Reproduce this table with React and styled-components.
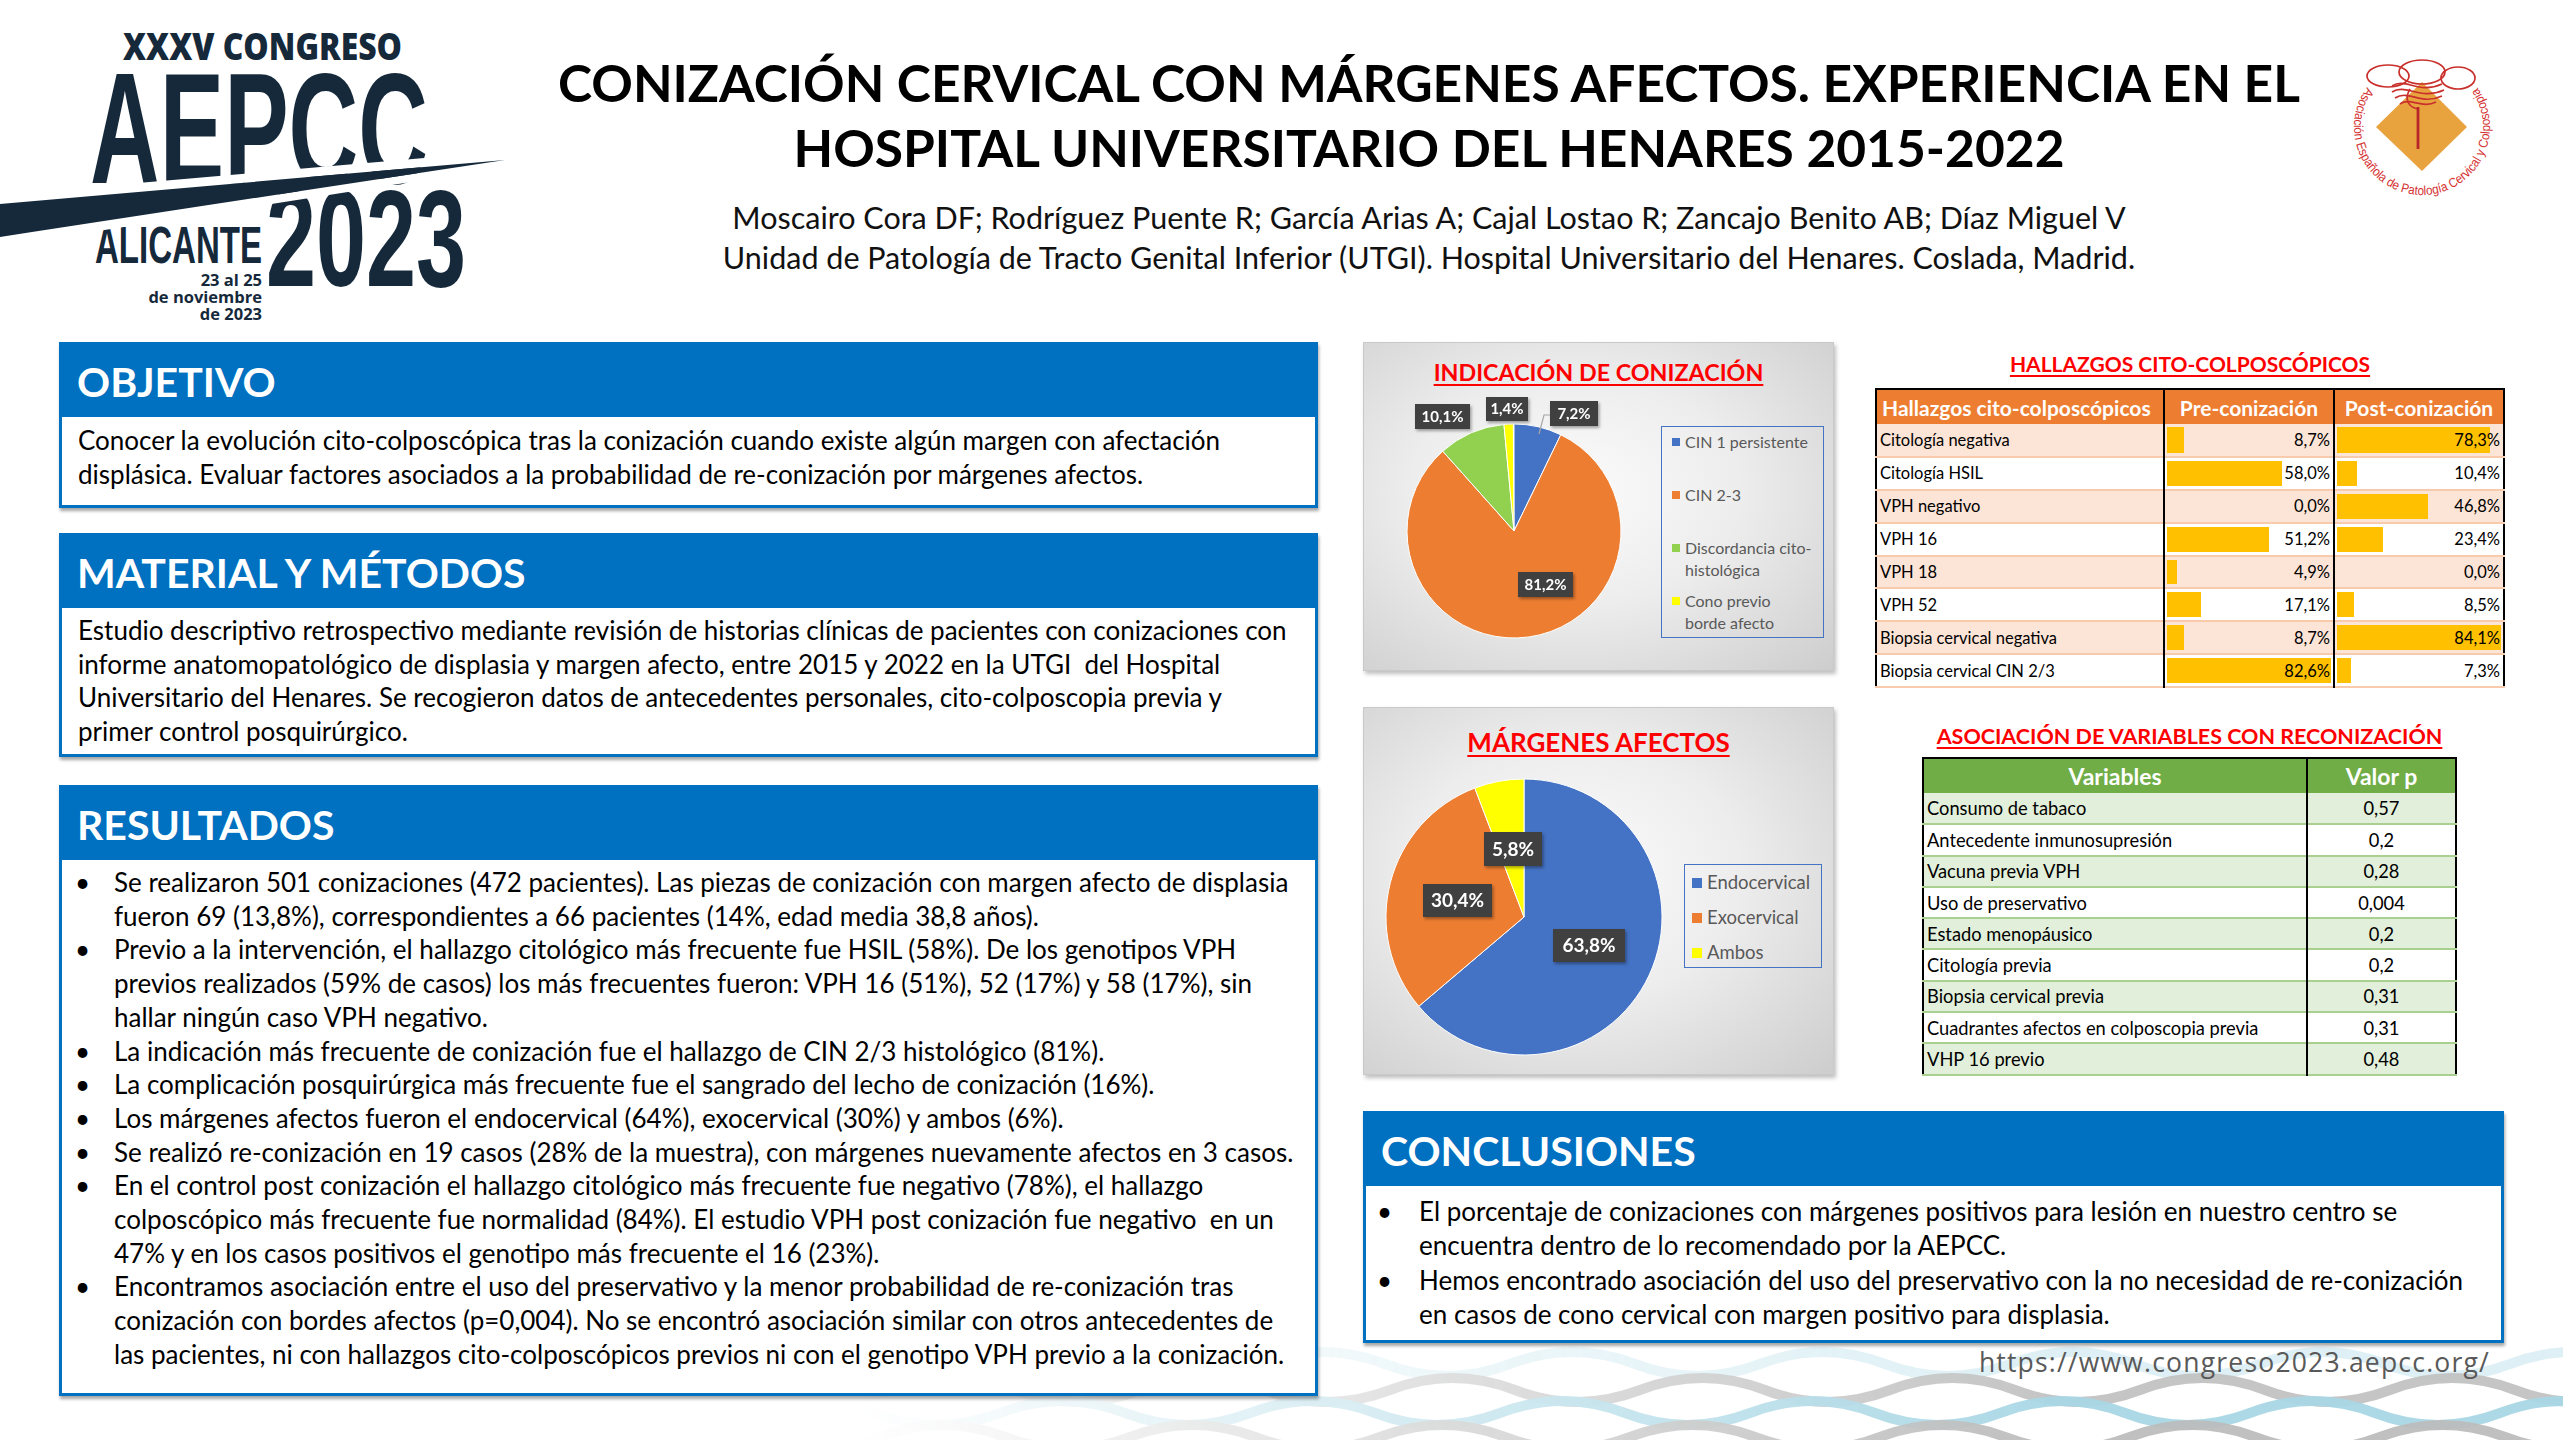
import React from "react";
import styled, { createGlobalStyle } from "styled-components";

const FONT = `Lato, "Open Sans", "Liberation Sans", sans-serif`;
const NAVY = "#15293b";

const GlobalStyle = createGlobalStyle`
  html, body { margin: 0; padding: 0; background: #fff; }
  body { width: 2563px; height: 1440px; overflow: hidden; font-family: ${FONT}; color: #000; }
`;

const Page = styled.div`
  position: relative;
  width: 2563px;
  height: 1440px;
  overflow: hidden;
  background: #fff;
`;

/* ---------- header ---------- */

const Header = styled.header`
  height: 342px;
  display: flex;
  align-items: flex-start;
`;

const TitleBlock = styled.div`
  flex: 1;
  text-align: center;
  padding-top: 50px;
`;

const MainTitle = styled.h1`
  margin: 0;
  font: 700 51.5px/65px ${FONT};
  color: #000;
  white-space: nowrap;
`;

const Authors = styled.p`
  margin: 17px 0 0;
  font: 400 30.5px/40px ${FONT};
  color: #111;
  white-space: nowrap;
`;

const SocietyWrap = styled.div`
  margin: 59px 65px 0 0;
  width: 150px;
  height: 142px;
`;

/* ---------- main ---------- */

const Main = styled.main`
  position: relative;
  z-index: 1;
  display: flex;
  gap: 45px;
  padding-left: 59px;
`;

const LeftCol = styled.div`
  width: 1259px;
  display: flex;
  flex-direction: column;
`;

const RightCol = styled.div`
  width: 1141px;
  display: flex;
  flex-direction: column;
`;

const Section = styled.section`
  box-sizing: border-box;
  height: ${(p) => p.$h}px;
  margin-top: ${(p) => p.$mt || 0}px;
  border: 3px solid #0070c0;
  background: #fff;
  box-shadow: 1px 3px 3px rgba(0, 0, 0, 0.35);
  display: flex;
  flex-direction: column;
`;

const SectionHead = styled.h2`
  margin: 0;
  flex-shrink: 0;
  height: 72px;
  background: #0070c0;
  color: #fff;
  font: 700 41px ${FONT};
  display: flex;
  align-items: center;
  padding-left: 15px;
`;

const SectionBody = styled.div`
  padding: ${(p) => p.$pt}px 16px 0 16px;
  font: 400 26px/33.7px ${FONT};
  color: #000;
  white-space: pre;
`;

const BulletList = styled.ul`
  list-style: none;
  margin: 0;
  padding: ${(p) => p.$pt}px 0 0 ${(p) => p.$indent}px;
  font: 400 26px/33.7px ${FONT};
  color: #000;
  white-space: pre;
`;

const BulletItem = styled.li`
  display: flex;
  margin-top: ${(p) => p.$gap || 0}px;
  &::before {
    content: "•";
    flex-shrink: 0;
    width: ${(p) => p.$bw}px;
  }
`;

/* ---------- charts ---------- */

const Row = styled.div`
  display: grid;
  grid-template-columns: 471px 1fr;
  column-gap: 41px;
  align-items: start;
  height: ${(p) => p.$h}px;
`;

const ChartFrame = styled.div`
  box-sizing: border-box;
  height: ${(p) => p.$h}px;
  border: 1px solid #c9c9c9;
  background: radial-gradient(ellipse at 45% 45%, #fbfbfb 0%, #ededed 45%, #cdcdcd 100%);
  box-shadow: 2px 3px 4px rgba(0, 0, 0, 0.25);
  display: flex;
  flex-direction: column;
`;

const ChartTitle = styled.div`
  box-sizing: border-box;
  flex-shrink: 0;
  height: ${(p) => p.$h}px;
  padding-top: ${(p) => p.$pt}px;
  text-align: center;
  font: 700 ${(p) => p.$fs}px/42px ${FONT};
  color: #ff0000;
  text-decoration: underline;
  text-decoration-thickness: 2px;
  text-underline-offset: 3px;
`;

const ChartBody = styled.div`
  flex: 1;
  display: flex;
  align-items: center;
  justify-content: space-between;
`;

const Legend = styled.div`
  box-sizing: border-box;
  width: ${(p) => p.$w}px;
  height: ${(p) => p.$h}px;
  margin: 0 ${(p) => p.$mr}px ${(p) => p.$mb || 0}px 0;
  padding: ${(p) => p.$pt}px 0 0 ${(p) => p.$pl}px;
  border: 1.5px solid #4472c4;
  font: 400 ${(p) => p.$fs}px/${(p) => p.$lh}px ${FONT};
  color: #595959;
  white-space: nowrap;
`;

const LegendItem = styled.div`
  display: flex;
  height: ${(p) => p.$step}px;
`;

const Swatch = styled.span`
  flex-shrink: 0;
  width: ${(p) => p.$s}px;
  height: ${(p) => p.$s}px;
  margin: ${(p) => (p.$lh - p.$s) / 2}px 5px 0 0;
  background: ${(p) => p.$c};
`;

/* ---------- tables ---------- */

const TableBlock = styled.div`
  display: flex;
  flex-direction: column;
  align-items: center;
`;

const TableTitle = styled.div`
  margin: ${(p) => p.$m};
  font: 700 ${(p) => p.$fs}px/30px ${FONT};
  color: #ff0000;
  text-decoration: underline;
  text-decoration-thickness: 2px;
  text-underline-offset: 3px;
  white-space: nowrap;
`;

const DataTable = styled.table`
  width: ${(p) => p.$w}px;
  table-layout: fixed;
  border-collapse: collapse;
  border: 2px solid #000;
  font: 400 ${(p) => p.$fs}px ${FONT};
  color: #000;
`;

const HeadCell = styled.th`
  height: 34px;
  padding: 0 5px;
  background: ${(p) => p.$bg};
  color: #fff;
  font-weight: 700;
  font-size: ${(p) => p.$fs}px;
  text-align: ${(p) => p.$align || "center"};
  white-space: nowrap;
  border-left: 2px solid #000;
  &:first-child {
    border-left: none;
  }
`;

const BodyRow = styled.tr`
  height: ${(p) => p.$h}px;
  background: ${(p) => (p.$alt ? p.$tint : "#fff")};
  border-bottom: 2px solid ${(p) => p.$sep};
`;

const LabelCell = styled.td`
  padding: 0 3px;
  white-space: nowrap;
`;

const CenterCell = styled.td`
  text-align: center;
  border-left: 2px solid #000;
`;

const BarCell = styled.td`
  position: relative;
  padding: 0 3px 0 0;
  text-align: right;
  border-left: 2px solid #000;
`;

const Bar = styled.span`
  position: absolute;
  left: 2px;
  top: 3px;
  bottom: 3px;
  background: #ffc000;
`;

const CellText = styled.span`
  position: relative;
`;

const Url = styled.div`
  margin-top: 2px;
  padding-right: 14px;
  text-align: right;
  font: 400 26.5px/34px "Open Sans", ${FONT};
  letter-spacing: 1.2px;
  color: #595959;
`;

const WaveLayer = styled.svg`
  position: absolute;
  left: 860px;
  top: 1290px;
  z-index: 0;
  pointer-events: none;
`;

/* ---------- data ---------- */

const indication = [
  { name: "CIN 1 persistente", value: 7.2, color: "#4472c4" },
  { name: "CIN 2-3", value: 81.2, color: "#ed7d31" },
  { name: "Discordancia cito-histológica", value: 10.1, color: "#92d050", lines: ["Discordancia cito-", "histológica"] },
  { name: "Cono previo borde afecto", value: 1.4, color: "#ffff00", lines: ["Cono previo", "borde afecto"] },
];

const margins = [
  { name: "Endocervical", value: 63.8, color: "#4472c4" },
  { name: "Exocervical", value: 30.4, color: "#ed7d31" },
  { name: "Ambos", value: 5.8, color: "#ffff00" },
];

const findings = [
  ["Citología negativa", 8.7, 78.3],
  ["Citología HSIL", 58.0, 10.4],
  ["VPH negativo", 0.0, 46.8],
  ["VPH 16", 51.2, 23.4],
  ["VPH 18", 4.9, 0.0],
  ["VPH 52", 17.1, 8.5],
  ["Biopsia cervical negativa", 8.7, 84.1],
  ["Biopsia cervical CIN 2/3", 82.6, 7.3],
];

const variables = [
  ["Consumo de tabaco", "0,57"],
  ["Antecedente inmunosupresión", "0,2"],
  ["Vacuna previa VPH", "0,28"],
  ["Uso de preservativo", "0,004"],
  ["Estado menopáusico", "0,2"],
  ["Citología previa", "0,2"],
  ["Biopsia cervical previa", "0,31"],
  ["Cuadrantes afectos en colposcopia previa", "0,31"],
  ["VHP 16 previo", "0,48"],
];

const objetivo = [
  "Conocer la evolución cito-colposcópica tras la conización cuando existe algún margen con afectación",
  "displásica. Evaluar factores asociados a la probabilidad de re-conización por márgenes afectos.",
];

const metodos = [
  "Estudio descriptivo retrospectivo mediante revisión de historias clínicas de pacientes con conizaciones con",
  "informe anatomopatológico de displasia y margen afecto, entre 2015 y 2022 en la UTGI  del Hospital",
  "Universitario del Henares. Se recogieron datos de antecedentes personales, cito-colposcopia previa y",
  "primer control posquirúrgico.",
];

const resultados = [
  [
    "Se realizaron 501 conizaciones (472 pacientes). Las piezas de conización con margen afecto de displasia",
    "fueron 69 (13,8%), correspondientes a 66 pacientes (14%, edad media 38,8 años).",
  ],
  [
    "Previo a la intervención, el hallazgo citológico más frecuente fue HSIL (58%). De los genotipos VPH",
    "previos realizados (59% de casos) los más frecuentes fueron: VPH 16 (51%), 52 (17%) y 58 (17%), sin",
    "hallar ningún caso VPH negativo.",
  ],
  ["La indicación más frecuente de conización fue el hallazgo de CIN 2/3 histológico (81%)."],
  ["La complicación posquirúrgica más frecuente fue el sangrado del lecho de conización (16%)."],
  ["Los márgenes afectos fueron el endocervical (64%), exocervical (30%) y ambos (6%)."],
  ["Se realizó re-conización en 19 casos (28% de la muestra), con márgenes nuevamente afectos en 3 casos."],
  [
    "En el control post conización el hallazgo citológico más frecuente fue negativo (78%), el hallazgo",
    "colposcópico más frecuente fue normalidad (84%). El estudio VPH post conización fue negativo  en un",
    "47% y en los casos positivos el genotipo más frecuente el 16 (23%).",
  ],
  [
    "Encontramos asociación entre el uso del preservativo y la menor probabilidad de re-conización tras",
    "conización con bordes afectos (p=0,004). No se encontró asociación similar con otros antecedentes de",
    "las pacientes, ni con hallazgos cito-colposcópicos previos ni con el genotipo VPH previo a la conización.",
  ],
];

const conclusiones = [
  [
    "El porcentaje de conizaciones con márgenes positivos para lesión en nuestro centro se",
    "encuentra dentro de lo recomendado por la AEPCC.",
  ],
  [
    "Hemos encontrado asociación del uso del preservativo con la no necesidad de re-conización",
    "en casos de cono cervical con margen positivo para displasia.",
  ],
];

const pct = (v) => v.toFixed(1).replace(".", ",") + "%";

const Lines = ({ lines }) =>
  lines.map((l, i) => (
    <React.Fragment key={i}>
      {i > 0 && <br />}
      {l}
    </React.Fragment>
  ));

/* ---------- drawings ---------- */

function AepccLogo() {
  return (
    <svg width="510" height="335" viewBox="0 0 510 335" style={{ display: "block", flexShrink: 0 }}>
      <g fill={NAVY} fontFamily="'Liberation Sans', Arial, sans-serif" fontWeight="700">
        <text x="123" y="60" fontSize="37" textLength="279" lengthAdjust="spacingAndGlyphs" fontFamily="'Open Sans', Lato, sans-serif" fontWeight="800">
          XXXV CONGRESO
        </text>
        <text x="90" y="183" fontSize="158" textLength="338" lengthAdjust="spacingAndGlyphs">
          AEPCC
        </text>
        <text x="266" y="286" fontSize="137" textLength="200" lengthAdjust="spacingAndGlyphs">
          2023
        </text>
        <text x="95" y="263" fontSize="52" textLength="167" lengthAdjust="spacingAndGlyphs">
          ALICANTE
        </text>
        <g fontFamily="'Open Sans', Lato, sans-serif" fontSize="16.5" textAnchor="end">
          <text x="262" y="286">23 al 25</text>
          <text x="262" y="303">de noviembre</text>
          <text x="262" y="320">de 2023</text>
        </g>
      </g>
      <path d="M0,195 L505,151 L505,160 L0,204 Z" fill="#fff" />
      <path d="M0,237 Q300,191 505,160 L505,167 Q300,200 0,246 Z" fill="#fff" />
      <path d="M0,204 L505,160 Q300,191 0,237 Z" fill={NAVY} />
    </svg>
  );
}

function SocietyLogo() {
  return (
    <svg width="150" height="142" viewBox="0 0 150 142">
      <defs>
        <path id="ringPath" d="M19,28 A68,68 0 1 0 126.8,25.2" />
      </defs>
      <path d="M28,68 L74,23 L119,68 L74,112 Z" fill="#e8a33e" />
      <g fill="none" stroke="#c9302c" strokeWidth="1.7">
        <ellipse cx="40" cy="17" rx="21" ry="11" />
        <ellipse cx="74" cy="13" rx="23" ry="12" />
        <ellipse cx="110" cy="19" rx="17" ry="11" />
        <path d="M44 27 C58 18, 70 36, 94 25" />
        <path d="M44 33 C58 24, 72 42, 96 31" />
        <path d="M47 39 C61 30, 73 47, 94 37" />
        <path d="M52 45 C62 38, 74 50, 88 43" />
        <path d="M62 30 C56 40, 60 48, 70 50" />
      </g>
      <path d="M70 48 L70 90" stroke="#b8262a" strokeWidth="2.8" />
      <text fontSize="13" fill="#d4302f" fontFamily="'Liberation Sans Narrow', 'Liberation Sans', sans-serif">
        <textPath href="#ringPath" textLength="298" lengthAdjust="spacingAndGlyphs">
          Asociación Española de Patología Cervical y Colposcopia
        </textPath>
      </text>
    </svg>
  );
}

function PieChart({ width, height, cx, cy, r, slices, labels, fs, leader }) {
  let a = -Math.PI / 2;
  const paths = slices.map((s) => {
    const a0 = a;
    const a1 = a + (s.value / 100) * 2 * Math.PI;
    a = a1;
    const large = a1 - a0 > Math.PI ? 1 : 0;
    const x0 = cx + r * Math.cos(a0);
    const y0 = cy + r * Math.sin(a0);
    const x1 = cx + r * Math.cos(a1);
    const y1 = cy + r * Math.sin(a1);
    return (
      <path
        key={s.name}
        d={`M${cx},${cy} L${x0},${y0} A${r},${r} 0 ${large} 1 ${x1},${y1} Z`}
        fill={s.color}
        stroke="#fff"
        strokeWidth="1"
      />
    );
  });
  return (
    <svg width={width} height={height} style={{ display: "block", flexShrink: 0 }}>
      <defs>
        <filter id={`sh${fs}`} x="-20%" y="-20%" width="150%" height="160%">
          <feDropShadow dx="1.5" dy="2" stdDeviation="1.5" floodColor="#000" floodOpacity="0.35" />
        </filter>
      </defs>
      {paths}
      {leader && <path d={leader} stroke="#a6a6a6" strokeWidth="1.2" fill="none" />}
      {labels.map((l) => (
        <g key={l.text} filter={`url(#sh${fs})`}>
          <rect x={l.x} y={l.y} width={l.w} height={l.h} fill="#404040" />
          <text
            x={l.x + l.w / 2}
            y={l.y + l.h / 2 + fs * 0.36}
            textAnchor="middle"
            fill="#fff"
            fontSize={fs}
            fontWeight="700"
            fontFamily={FONT}
          >
            {l.text}
          </text>
        </g>
      ))}
    </svg>
  );
}

function wavePath(y, amp, len, width, phase) {
  let d = `M${phase - len},${y} q${len / 4},${-amp * 2} ${len / 2},0`;
  for (let x = phase - len / 2; x < width + len; x += len / 2) d += ` t${len / 2},0`;
  return d;
}

function Waves() {
  const w = 1703;
  const rows = [
    { y: 74, c: "#c8e6ef", o: 0.6, p: 150 },
    { y: 100, c: "#c2c2c2", o: 0.95, p: 30 },
    { y: 123, c: "#a9d7e5", o: 0.95, p: 140 },
    { y: 147, c: "#bdbdbd", o: 0.95, p: 20 },
  ];
  return (
    <WaveLayer width={w} height="150" viewBox={`0 0 ${w} 150`}>
      <defs>
        <linearGradient id="waveFade" x1="0" x2="1" y1="0" y2="0">
          <stop offset="0" stopColor="#fff" stopOpacity="0" />
          <stop offset="0.35" stopColor="#fff" stopOpacity="0.55" />
          <stop offset="0.7" stopColor="#fff" stopOpacity="1" />
        </linearGradient>
        <mask id="waveMask">
          <rect width={w} height="150" fill="url(#waveFade)" />
        </mask>
      </defs>
      <g mask="url(#waveMask)" fill="none" strokeWidth="10" strokeLinecap="round">
        {rows.map((r) => (
          <path key={r.y} d={wavePath(r.y, 12, 250, w, r.p)} stroke={r.c} opacity={r.o} />
        ))}
      </g>
    </WaveLayer>
  );
}

function ChartLegend({ items, ...rest }) {
  return (
    <Legend {...rest}>
      {items.map((it) => (
        <LegendItem key={it.name} $step={rest.$step}>
          <Swatch $c={it.color} $s={rest.$s} $lh={rest.$lh} />
          <div>
            <Lines lines={it.lines || [it.name]} />
          </div>
        </LegendItem>
      ))}
    </Legend>
  );
}

export default function App() {
  const preMax = Math.max(...findings.map((f) => f[1]));
  const postMax = Math.max(...findings.map((f) => f[2]));

  return (
    <Page>
      <GlobalStyle />
      <Header>
        <AepccLogo />
        <TitleBlock>
          <MainTitle>
            CONIZACIÓN CERVICAL CON MÁRGENES AFECTOS. EXPERIENCIA EN EL
            <br />
            HOSPITAL UNIVERSITARIO DEL HENARES 2015-2022
          </MainTitle>
          <Authors>
            Moscairo Cora DF; Rodríguez Puente R; García Arias A; Cajal Lostao R; Zancajo Benito AB; Díaz Miguel V
            <br />
            Unidad de Patología de Tracto Genital Inferior (UTGI). Hospital Universitario del Henares. Coslada, Madrid.
          </Authors>
        </TitleBlock>
        <SocietyWrap>
          <SocietyLogo />
        </SocietyWrap>
      </Header>

      <Main>
        <LeftCol>
          <Section $h={166}>
            <SectionHead>OBJETIVO</SectionHead>
            <SectionBody $pt={7}>
              <Lines lines={objetivo} />
            </SectionBody>
          </Section>

          <Section $h={224} $mt={25}>
            <SectionHead>MATERIAL Y MÉTODOS</SectionHead>
            <SectionBody $pt={6}>
              <Lines lines={metodos} />
            </SectionBody>
          </Section>

          <Section $h={611} $mt={28}>
            <SectionHead>RESULTADOS</SectionHead>
            <BulletList $pt={6} $indent={13}>
              {resultados.map((lines, i) => (
                <BulletItem key={i} $bw={39}>
                  <div>
                    <Lines lines={lines} />
                  </div>
                </BulletItem>
              ))}
            </BulletList>
          </Section>
        </LeftCol>

        <RightCol>
          <Row $h={365}>
            <ChartFrame $h={329}>
              <ChartTitle $h={50} $pt={8} $fs={23.3}>
                INDICACIÓN DE CONIZACIÓN
              </ChartTitle>
              <ChartBody>
                <PieChart
                  width={290}
                  height={277}
                  cx={150}
                  cy={138}
                  r={107}
                  slices={indication}
                  fs={15}
                  leader="M186,22 L180,22 L175,41"
                  labels={[
                    { text: "10,1%", x: 51, y: 11, w: 55, h: 25 },
                    { text: "1,4%", x: 122, y: 4, w: 42, h: 24 },
                    { text: "7,2%", x: 186, y: 8, w: 48, h: 25 },
                    { text: "81,2%", x: 154, y: 179, w: 55, h: 25 },
                  ]}
                />
                <ChartLegend
                  items={indication}
                  $w={163}
                  $h={212}
                  $mr={9}
                  $pt={4}
                  $pl={10}
                  $fs={16}
                  $lh={22}
                  $step={53}
                  $s={8}
                />
              </ChartBody>
            </ChartFrame>

            <TableBlock>
              <TableTitle $m="7px 0 9px" $fs={21}>
                HALLAZGOS CITO-COLPOSCÓPICOS
              </TableTitle>
              <DataTable $w={628} $fs={16.5}>
                <colgroup>
                  <col style={{ width: 288 }} />
                  <col style={{ width: 170 }} />
                  <col style={{ width: 170 }} />
                </colgroup>
                <thead>
                  <tr>
                    <HeadCell $bg="#ed7d31" $fs={21} $align="left">
                      Hallazgos cito-colposcópicos
                    </HeadCell>
                    <HeadCell $bg="#ed7d31" $fs={21}>
                      Pre-conización
                    </HeadCell>
                    <HeadCell $bg="#ed7d31" $fs={21}>
                      Post-conización
                    </HeadCell>
                  </tr>
                </thead>
                <tbody>
                  {findings.map(([label, pre, post], i) => (
                    <BodyRow key={label} $h={32.9} $alt={i % 2 === 0} $tint="#fce4d6" $sep="#f8cbad">
                      <LabelCell>{label}</LabelCell>
                      <BarCell>
                        <Bar style={{ width: `${(pre / preMax) * 97.5}%` }} />
                        <CellText>{pct(pre)}</CellText>
                      </BarCell>
                      <BarCell>
                        <Bar style={{ width: `${(post / postMax) * 97.5}%` }} />
                        <CellText>{pct(post)}</CellText>
                      </BarCell>
                    </BodyRow>
                  ))}
                </tbody>
              </DataTable>
            </TableBlock>
          </Row>

          <Row $h={404}>
            <ChartFrame $h={368}>
              <ChartTitle $h={60} $pt={13} $fs={26}>
                MÁRGENES AFECTOS
              </ChartTitle>
              <ChartBody>
                <PieChart
                  width={310}
                  height={306}
                  cx={160}
                  cy={149}
                  r={138}
                  slices={margins}
                  fs={19}
                  labels={[
                    { text: "5,8%", x: 120, y: 64, w: 58, h: 34 },
                    { text: "30,4%", x: 59, y: 116, w: 69, h: 33 },
                    { text: "63,8%", x: 189, y: 161, w: 72, h: 33 },
                  ]}
                />
                <ChartLegend
                  items={margins}
                  $w={138}
                  $h={104}
                  $mr={11}
                  $mb={10}
                  $pt={0}
                  $pl={7}
                  $fs={18.5}
                  $lh={35}
                  $step={35}
                  $s={10}
                />
              </ChartBody>
            </ChartFrame>

            <TableBlock>
              <TableTitle $m="14px 0 6px" $fs={21.5}>
                ASOCIACIÓN DE VARIABLES CON RECONIZACIÓN
              </TableTitle>
              <DataTable $w={533} $fs={18.3}>
                <colgroup>
                  <col style={{ width: 384 }} />
                  <col style={{ width: 149 }} />
                </colgroup>
                <thead>
                  <tr>
                    <HeadCell $bg="#70ad47" $fs={23}>
                      Variables
                    </HeadCell>
                    <HeadCell $bg="#70ad47" $fs={23}>
                      Valor p
                    </HeadCell>
                  </tr>
                </thead>
                <tbody>
                  {variables.map(([label, p], i) => (
                    <BodyRow key={label} $h={31.3} $alt={i % 2 === 0} $tint="#e2efda" $sep="#a9d08e">
                      <LabelCell>{label}</LabelCell>
                      <CenterCell>{p}</CenterCell>
                    </BodyRow>
                  ))}
                </tbody>
              </DataTable>
            </TableBlock>
          </Row>

          <Section $h={232}>
            <SectionHead>CONCLUSIONES</SectionHead>
            <BulletList $pt={9} $indent={11}>
              {conclusiones.map((lines, i) => (
                <BulletItem key={i} $bw={42} $gap={i ? 2 : 0}>
                  <div>
                    <Lines lines={lines} />
                  </div>
                </BulletItem>
              ))}
            </BulletList>
          </Section>

          <Url>https://www.congreso2023.aepcc.org/</Url>
        </RightCol>
      </Main>
      <Waves />
    </Page>
  );
}
